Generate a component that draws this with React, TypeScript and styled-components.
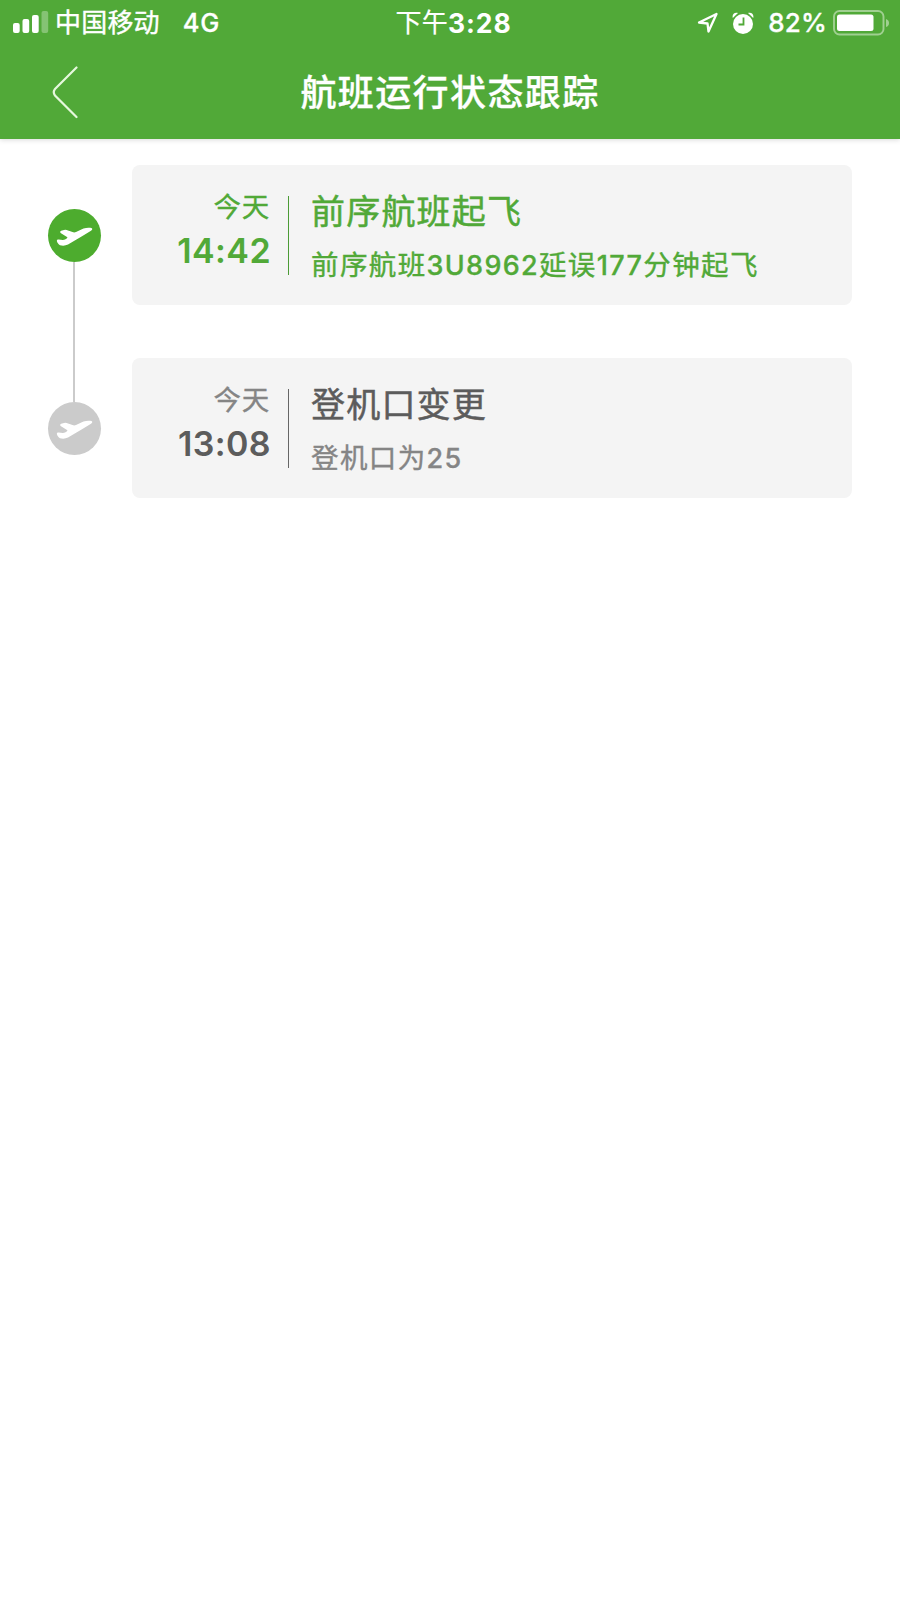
import React from 'react';
import styled, { createGlobalStyle } from 'styled-components';

const GlobalStyle = createGlobalStyle`
  body {
    margin: 0;
    background: #fff;
    font-family: Inter, 'Noto Sans CJK SC', sans-serif;
  }
`;

const Screen = styled.div`
  width: 900px;
  min-height: 1600px;
  background: #fff;
`;

const Header = styled.header`
  height: 139px;
  background: #51a938;
  color: #fff;
  box-shadow: 0 1px 5px rgba(0, 0, 0, 0.15);
`;

const StatusBar = styled.div`
  display: grid;
  grid-template-columns: 1fr auto 1fr;
  align-items: center;
  height: 46px;
  padding: 0 11px 0 13px;
  box-sizing: border-box;
  line-height: 46px;
`;

const StatusGroup = styled.div<{ $end?: boolean; $indent?: number }>`
  display: flex;
  align-items: center;
  justify-content: ${(p) => (p.$end ? 'flex-end' : 'flex-start')};
  height: 46px;
  padding-left: ${(p) => p.$indent ?? 0}px;
`;

const Run = styled.span<{ $size: number; $weight?: number; $spacing?: number; $stroke?: number }>`
  font-size: ${(p) => p.$size}px;
  font-weight: ${(p) => p.$weight ?? 400};
  letter-spacing: ${(p) => p.$spacing ?? 0}px;
  -webkit-text-stroke: ${(p) => p.$stroke ?? 0}px currentColor;
  white-space: nowrap;
`;

const Carrier = styled(Run)`
  margin: 0 23px 0 6px;
`;

const Meridiem = styled(Run)`
  padding-top: 0;
`;

const Icon = styled.svg<{ $left?: number; $right?: number }>`
  display: block;
  flex: none;
  margin-left: ${(p) => p.$left ?? 0}px;
  margin-right: ${(p) => p.$right ?? 0}px;
`;

const NavBar = styled.div`
  display: grid;
  grid-template-columns: 100px 1fr 100px;
  align-items: center;
  height: 91px;
`;

const BackButton = styled.button`
  display: flex;
  height: 91px;
  padding: 0 0 0 50px;
  border: 0;
  background: none;
  align-items: center;
`;

const Title = styled.h1`
  margin: 0;
  padding-top: 2px;
  text-align: center;
  font-size: 36px;
  line-height: 91px;
  font-weight: 500;
  letter-spacing: 1.4px;
  -webkit-text-stroke: 0.3px currentColor;
`;

const Timeline = styled.main`
  padding-top: 26px;
`;

const Event = styled.section<{ $last?: boolean }>`
  display: grid;
  grid-template-columns: 132px 720px;
  height: ${(p) => (p.$last ? 140 : 193)}px;
`;

const Rail = styled.div`
  padding: 44px 0 0 48px;
`;

const Node = styled.div<{ $color: string }>`
  display: flex;
  align-items: center;
  justify-content: center;
  width: 53px;
  height: 53px;
  padding-top: 3px;
  box-sizing: border-box;
  border-radius: 50%;
  background: ${(p) => p.$color};
`;

const Connector = styled.div`
  width: 2px;
  height: 140px;
  margin-left: 25px;
  background: #cbcbcb;
`;

const Card = styled.div`
  display: flex;
  height: 140px;
  padding-top: 31px;
  box-sizing: border-box;
  border-radius: 8px;
  background: #f4f4f4;
`;

const When = styled.div<{ $color: string }>`
  display: flex;
  flex-direction: column;
  align-items: flex-end;
  width: 157px;
  height: 79px;
  padding-right: 17px;
  box-sizing: border-box;
  border-right: 1px solid ${(p) => p.$color};
  margin-right: 22px;
`;

const Day = styled.div<{ $color: string }>`
  height: 30px;
  margin-top: -4px;
  padding-right: 1px;
  line-height: 30px;
  color: ${(p) => p.$color};
`;

const Time = styled.div<{ $color: string }>`
  height: 50px;
  margin-top: 4px;
  line-height: 50px;
  color: ${(p) => p.$color};
`;

const Details = styled.div`
  margin-top: -9px;
`;

const Heading = styled.h2<{ $color: string }>`
  height: 50px;
  margin: 0;
  line-height: 50px;
  font-weight: 400;
  color: ${(p) => p.$color};
`;

const Note = styled.p<{ $color: string }>`
  height: 40px;
  margin: 8px 0 0;
  line-height: 40px;
  color: ${(p) => p.$color};
`;

interface Palette {
  node: string;
  rule: string;
  day: string;
  time: string;
  heading: string;
  note: string;
}

const active: Palette = {
  node: '#4dac2e',
  rule: '#4b9b36',
  day: '#51a938',
  time: '#51a938',
  heading: '#51a938',
  note: '#51a938',
};

const past: Palette = {
  node: '#cbcbcb',
  rule: '#666',
  day: '#858585',
  time: '#5c5c5c',
  heading: '#5c5c5c',
  note: '#858585',
};

const events = [
  { day: '今天', time: '14:42', title: '前序航班起飞', note: ['前序航班', '3U8962', '延误', '177', '分钟起飞'], palette: active },
  { day: '今天', time: '13:08', title: '登机口变更', note: ['登机口为', '25'], palette: past },
];

const Plane = () => (
  <Icon width="37" height="20" viewBox="0 0 37 20">
    <path
      fill="#fff"
      d="M4.600 6C3.900 5 4.200 4.200 5.200 3.800L8 2.900Q9.300 2.500 10.600 2.900L16.500 5.100Q18.300 5.800 20 5L27.500 1.600C30.500 .5 33.500 .5 35.400 1.100C36.800 1.800 36.400 2.900 35 3.800L26 9.300L12 17.600C9.500 18.900 6.500 19 4 18.300C2.500 17.500 1.400 15.800 .9 14.200C.6 13 1.600 12.600 2.700 12.600L6.800 13Q8.300 13 9.500 12.200L11 11.200Q11.900 10.600 11 10Z"
    />
  </Icon>
);

export default function App() {
  return (
    <Screen>
      <GlobalStyle />
      <Header>
        <StatusBar>
          <StatusGroup>
            <Icon width="36" height="24" viewBox="0 0 36 24" fill="#fff">
              <rect x="0" y="12" width="6.700" height="10" rx="2" />
              <rect x="9.500" y="8" width="6.700" height="14" rx="2" />
              <rect x="19" y="4" width="6.700" height="18" rx="2" />
              <rect x="28.500" y="0" width="6.700" height="22" rx="2" opacity="0.3" />
            </Icon>
            <Carrier $size={26} $spacing={0.2} $stroke={0.4}>中国移动</Carrier>
            <Run $size={25.5} $weight={500} $spacing={0.6} $stroke={0.3}>4G</Run>
          </StatusGroup>
          <StatusGroup $indent={5}>
            <Meridiem $size={26} $spacing={0.3} $stroke={0.2}>下午</Meridiem>
            <Run $size={26.500} $weight={700} $spacing={0.9}>3:28</Run>
          </StatusGroup>
          <StatusGroup $end>
            <Icon width="22" height="22" viewBox="0 0 22 22" $right={13}>
              <path d="M2 10.500L19.500 2L11.500 19.500L10.500 11.500Z" fill="none" stroke="#fff" strokeWidth="2.300" strokeLinejoin="round" />
            </Icon>
            <Icon width="22" height="22" viewBox="0 0 22 22" $right={14}>
              <circle cx="11" cy="12" r="10" fill="#fff" />
              <path d="M.8 6C-.2 2.500 2.500 0 6 1.100M21.200 6C22.200 2.500 19.500 0 16 1.100" fill="#fff" />
              <path d="M11.500 5.500V12.500H6.500" fill="none" stroke="#51a938" strokeWidth="1.800" />
            </Icon>
            <Run $size={26} $weight={500} $spacing={0.2} $stroke={0.3}>82%</Run>
            <Icon width="56" height="26" viewBox="0 0 56 26" $left={6}>
              <rect x="1" y="1" width="49.500" height="23.500" rx="5.500" fill="none" stroke="#a0d091" strokeWidth="1.900" />
              <rect x="4" y="4.500" width="36.500" height="16.500" rx="2.500" fill="#fff" />
              <path d="M53 9Q56 10 56 13T53 17Z" fill="#a0d091" />
            </Icon>
          </StatusGroup>
        </StatusBar>
        <NavBar>
          <BackButton aria-label="返回">
            <Icon width="30" height="54" viewBox="0 0 30 54">
              <path d="M26.500 1.500L5 23Q2.500 26 5 29.500L26.500 51" fill="none" stroke="#e6f8dd" strokeWidth="2.200" strokeLinecap="round" />
            </Icon>
          </BackButton>
          <Title>航班运行状态跟踪</Title>
        </NavBar>
      </Header>
      <Timeline>
        {events.map(({ day, time, title, note, palette }, i) => {
          const last = i === events.length - 1;
          return (
            <Event key={time} $last={last}>
              <Rail>
                <Node $color={palette.node}>
                  <Plane />
                </Node>
                {!last && <Connector />}
              </Rail>
              <Card>
                <When $color={palette.rule}>
                  <Day $color={palette.day}>
                    <Run $size={27.500} $spacing={0.7} $stroke={0.3}>{day}</Run>
                  </Day>
                  <Time $color={palette.time}>
                    <Run $size={34} $weight={600} $spacing={0.4}>{time}</Run>
                  </Time>
                </When>
                <Details>
                  <Heading $color={palette.heading}>
                    <Run $size={34} $spacing={1.2} $stroke={0.5}>{title}</Run>
                  </Heading>
                  <Note $color={palette.note}>
                    {note.map((part, n) =>
                      n % 2 ? (
                        <Run key={n} $size={27} $weight={500} $spacing={1.300} $stroke={0.3}>{part}</Run>
                      ) : (
                        <Run key={n} $size={27.500} $spacing={1.400} $stroke={0.4}>{part}</Run>
                      ),
                    )}
                  </Note>
                </Details>
              </Card>
            </Event>
          );
        })}
      </Timeline>
    </Screen>
  );
}
